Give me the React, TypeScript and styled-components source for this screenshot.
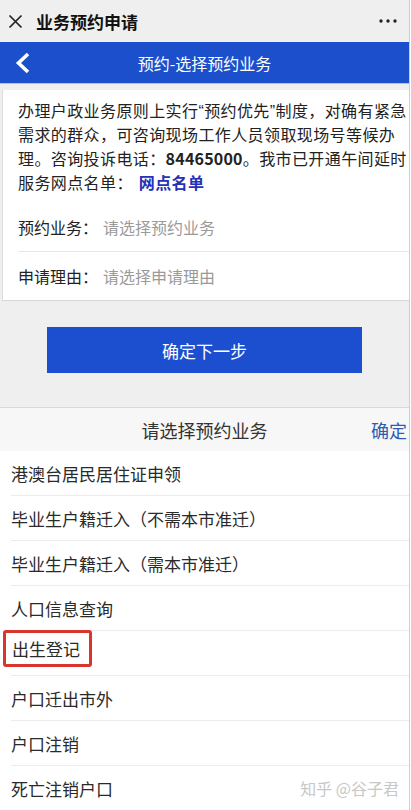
import React from 'react';
import styled, { createGlobalStyle } from 'styled-components';

const GlobalStyle = createGlobalStyle`
  body {
    margin: 0;
    background: #ffffff;
    font-family: "Noto Sans CJK SC", "Noto Sans", sans-serif;
    color: #222;
  }
`;

const Page = styled.div`
  width: 409px;
  border-right: 1px solid #cfcfcf;
  background: #efefef;
  min-height: 810px;
`;

const TopBar = styled.div`
  height: 42px;
  display: flex;
  align-items: center;
  padding: 0 12px 0 8px;
  background: #efefef;
`;

const TopTitle = styled.div`
  flex: 1;
  margin-left: 13px;
  font-size: 17px;
  font-weight: 700;
  color: #111;
`;

const NavBar = styled.div`
  height: 41px;
  display: grid;
  grid-template-columns: 1fr auto 1fr;
  align-items: center;
  background: #1b4fcb;
  border-bottom: 1px solid #a9c2ec;
`;

const BackBtn = styled.div`
  padding-left: 15px;
  display: flex;
  align-items: center;
`;

const NavTitle = styled.div`
  color: #fff;
  font-size: 16px;
`;

const Card = styled.div`
  margin: 6px 0 0 2px;
  background: #fff;
  border-left: 1px solid #dcdcdc;
  border-bottom: 1px solid #d6d6d6;
`;

const Notice = styled.p`
  margin: 0;
  padding: 8px 15px 0 15px;
  font-size: 16px;
  line-height: 24px;
  letter-spacing: 0.4px;
  color: #222;
  white-space: nowrap;
`;

const Quote = styled.span`
  font-family: "Liberation Sans", sans-serif;
  line-height: 16px;
`;

const Phone = styled.b`
  font-weight: 700;
  letter-spacing: 0.2px;
`;

const Link = styled.a`
  color: #2531b8;
  font-weight: 700;
  text-decoration: none;
  margin-left: 6px;
`;

const FieldList = styled.div`
  margin-top: 9px;
  padding-left: 15px;
`;

const Field = styled.div<{ $last?: boolean }>`
  height: 48px;
  display: flex;
  align-items: center;
  border-bottom: ${p => (p.$last ? 'none' : '1px solid #e6e6e6')};
  font-size: 16px;
`;

const FieldLabel = styled.span`
  color: #222;
  width: 85px;
`;

const Placeholder = styled.span`
  color: #9a9a9a;
`;

const ButtonWrap = styled.div`
  padding: 26px 0 34px 0;
  display: flex;
  justify-content: center;
`;

const NextButton = styled.button`
  width: 315px;
  height: 46px;
  border: none;
  background: #1b4fcf;
  color: #fff;
  font-family: inherit;
  font-size: 17px;
`;

const PickerHeader = styled.div`
  height: 43px;
  display: grid;
  grid-template-columns: 1fr auto 1fr;
  align-items: center;
  background: #f7f7f7;
  border-top: 1px solid #dadada;
`;

const PickerTitle = styled.div`
  font-size: 18px;
  color: #333;
`;

const PickerOk = styled.div`
  justify-self: end;
  padding-right: 2px;
  font-size: 18px;
  color: #2b5bb3;
`;

const List = styled.div`
  background: #fff;
  padding-left: 11px;
`;

const Item = styled.div`
  height: 44px;
  display: flex;
  align-items: center;
  justify-content: space-between;
  border-bottom: 1px solid #ececec;
  font-size: 17px;
  color: #2a2a2a;
`;

const Marked = styled.span`
  display: inline-block;
  position: relative;
  top: -5px;
  margin-left: -8px;
  padding: 3px 9px 3px 6px;
  border: 3px solid #d8352c;
  border-radius: 3px;
`;

const Watermark = styled.span`
  color: #c8c8c8;
  font-size: 16px;
  padding-right: 10px;
`;

const items = [
  '港澳台居民居住证申领',
  '毕业生户籍迁入（不需本市准迁）',
  '毕业生户籍迁入（需本市准迁）',
  '人口信息查询',
  '出生登记',
  '户口迁出市外',
  '户口注销',
  '死亡注销户口',
];

export default function App() {
  return (
    <>
      <GlobalStyle />
      <Page>
        <TopBar>
          <svg width="15" height="15" viewBox="0 0 15 15">
            <path d="M1.5 1.5 L13.5 13.5 M13.5 1.5 L1.5 13.5" stroke="#222" strokeWidth="1.7" fill="none" />
          </svg>
          <TopTitle>业务预约申请</TopTitle>
          <svg width="18" height="6" viewBox="0 0 18 6">
            <circle cx="2" cy="3" r="1.7" fill="#222" />
            <circle cx="9" cy="3" r="1.7" fill="#222" />
            <circle cx="16" cy="3" r="1.7" fill="#222" />
          </svg>
        </TopBar>
        <NavBar>
          <BackBtn>
            <svg width="16" height="22" viewBox="0 0 16 22">
              <polyline points="13,2 3.5,11 13,20" stroke="#fff" strokeWidth="3.6" fill="none" />
            </svg>
          </BackBtn>
          <NavTitle>预约-选择预约业务</NavTitle>
          <div />
        </NavBar>
        <Card>
          <Notice>
            办理户政业务原则上实行<Quote>“</Quote>预约优先<Quote>”</Quote>制度，对确有紧急
            <br />
            需求的群众，可咨询现场工作人员领取现场号等候办
            <br />
            理。咨询投诉电话：<Phone>84465000</Phone>。我市已开通午间延时
            <br />
            服务网点名单：<Link>网点名单</Link>
          </Notice>
          <FieldList>
            <Field>
              <FieldLabel>预约业务：</FieldLabel>
              <Placeholder>请选择预约业务</Placeholder>
            </Field>
            <Field $last>
              <FieldLabel>申请理由：</FieldLabel>
              <Placeholder>请选择申请理由</Placeholder>
            </Field>
          </FieldList>
        </Card>
        <ButtonWrap>
          <NextButton>确定下一步</NextButton>
        </ButtonWrap>
        <PickerHeader>
          <div />
          <PickerTitle>请选择预约业务</PickerTitle>
          <PickerOk>确定</PickerOk>
        </PickerHeader>
        <List>
          {items.map((name, i) => (
            <Item key={name}>
              {name === '出生登记' ? <Marked>{name}</Marked> : <span>{name}</span>}
              {i === items.length - 1 && <Watermark>知乎 @谷子君</Watermark>}
            </Item>
          ))}
        </List>
      </Page>
    </>
  );
}
